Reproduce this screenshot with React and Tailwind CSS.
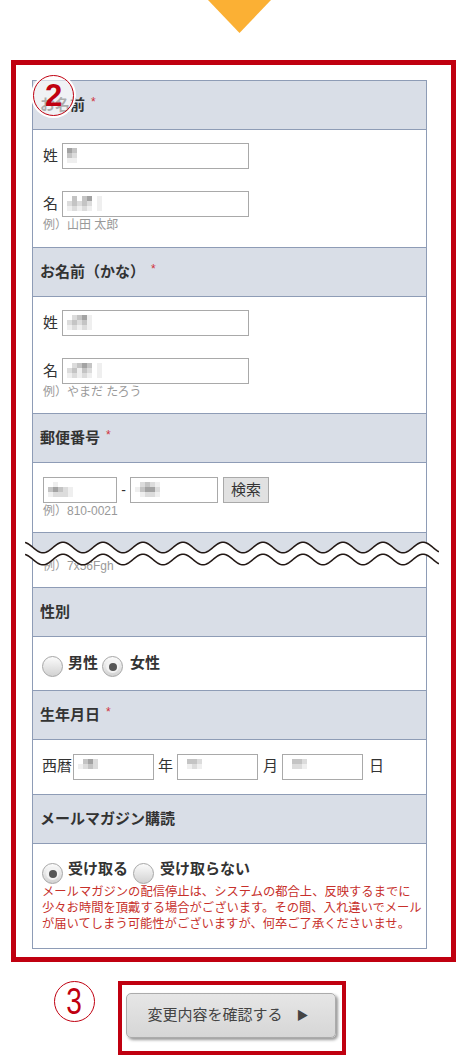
const font = "font-['Liberation_Sans','Noto_Sans_CJK_JP',sans-serif]"

const shades = { "1": "bg-[#efefef]", "2": "bg-[#dcdcdc]", "3": "bg-[#c4c4c4]", "4": "bg-[#a3a3a3]" }

// mosaic that hides the filled-in personal data
function Pix({ rows }) {
  return (
    <div className="absolute left-[4px] top-[4px] flex flex-col">
      {rows.map((r, i) => (
        <div key={i} className="flex">
          {r.split("").map((c, j) => (
            <div key={j} className={"w-[5px] h-[5px] " + (shades[c] || "")} />
          ))}
        </div>
      ))}
    </div>
  )
}

function Input({ w, rows }) {
  return (
    <div className={"relative h-[26px] border border-[#a9a9a9] bg-white shrink-0 " + w}>
      {rows && <Pix rows={rows} />}
    </div>
  )
}

function Head({ children, req }) {
  return (
    <div className="h-[49px] bg-[#d9dee7] border-b border-[#8e9cb6] flex items-center pl-[7px] text-[15px] font-bold text-[#333]">
      <span>{children}</span>
      {req && <span className="text-[#d0313a] text-[12px] font-normal ml-[6px] -mt-[6px]">*</span>}
    </div>
  )
}

function Example({ children }) {
  return <div className="h-[16px] leading-[16px] text-[12px] text-[#999] pl-[10px]">{children}</div>
}

function Radio({ checked, size = "w-[21px] h-[21px]", mt }) {
  return (
    <div className={"shrink-0 rounded-full border border-[#a6a6a6] bg-[linear-gradient(#fbfbfb,#d2d2d2)] flex items-center justify-center " + size + " " + mt}>
      {checked && (
        <div className="w-[13px] h-[13px] rounded-full bg-[#f2f2f2] flex items-center justify-center">
          <div className="w-[8px] h-[8px] rounded-full bg-[#555]" />
        </div>
      )}
    </div>
  )
}

function wavePts(yc) {
  const pts = []
  for (let x = 0; x <= 414; x += 1) {
    const y = yc - 5.3 * Math.cos((2 * Math.PI * (x - 38)) / 40)
    pts.push([x, y.toFixed(2)])
  }
  return pts
}

function Wave() {
  const top = wavePts(7.5)
  const bot = wavePts(19.5)
  const line = (p) => p.map((q, i) => (i ? "L" : "M") + q[0] + "," + q[1]).join("")
  const fill = line(top) + bot.slice().reverse().map((q) => "L" + q[0] + "," + q[1]).join("") + "Z"
  return (
    <svg className="absolute left-[-8px] top-[7px]" width="414" height="30" viewBox="0 0 414 30">
      <path d={fill} fill="#fff" />
      <path d={line(top)} fill="none" stroke="#231815" strokeWidth="1.6" />
      <path d={line(bot)} fill="none" stroke="#231815" strokeWidth="1.6" />
    </svg>
  )
}

function NameRow({ label, rows }) {
  return (
    <div className="flex items-center pl-[10px]">
      <span className="w-[19px] text-[15px] leading-[26px] text-[#333]">{label}</span>
      <Input w="w-[187px]" rows={rows} />
    </div>
  )
}

export default function App() {
  return (
    <div className={"w-[468px] h-[1059px] bg-white overflow-hidden " + font}>
      <div className="pl-[208px]">
        <svg width="63" height="33" viewBox="0 0 63 33">
          <polygon points="0,0 63,0 31.5,33" fill="#fbb034" />
        </svg>
      </div>

      <div className="relative mt-[27px] ml-[11px] w-[445px] border-[5px] border-[#c00010] pt-[15px] pl-[16px] pr-[24px] pb-[8px]">
        <div className="border-x border-t border-[#8e9cb6]">
          <Head req>お名前</Head>
          <div className="border-b border-[#8e9cb6] pt-[13px] pb-[14px]">
            <NameRow label="姓" rows={["43", "32", "11"]} />
            <div className="mt-[22px]">
              <NameRow label="名" rows={["0303401", "2323201", "1212101"]} />
            </div>
            <Example>例）山田 太郎</Example>
          </div>

          <Head req>お名前（かな）</Head>
          <div className="border-b border-[#8e9cb6] pt-[13px] pb-[13px]">
            <NameRow label="姓" rows={["02341", "23231", "12121"]} />
            <div className="mt-[22px]">
              <NameRow label="名" rows={["0234301", "2313201", "1212101"]} />
            </div>
            <Example>例）やまだ たろう</Example>
          </div>

          <Head req>郵便番号</Head>
          <div className="border-b border-[#8e9cb6] pt-[14px] pb-[13px]">
            <div className="flex items-center pl-[10px]">
              <Input w="w-[74px]" rows={["01", "34321", "12221"]} />
              <span className="w-[13px] text-center text-[14px] text-[#333]">-</span>
              <Input w="w-[88px]" rows={["02321", "13442", "01221"]} />
              <div className="ml-[5px] w-[46px] h-[26px] border border-[#a9a9a9] bg-[#e1e1e1] text-[15px] leading-[24px] text-[#333] text-center">
                検索
              </div>
            </div>
            <Example>例）810-0021</Example>
          </div>

          <div className="relative border-b border-[#8e9cb6]">
            <div className="h-[20px] bg-[#d9dee7]" />
            <div className="pt-[5px] pb-[13px]">
              <Example>例）7x56Fgh</Example>
            </div>
            <Wave />
          </div>

          <Head>性別</Head>
          <div className="border-b border-[#8e9cb6] pt-[16px] pb-[13px] pl-[9px] h-[54px] flex items-start text-[15px] leading-[20px] font-bold text-[#333]">
            <Radio mt="mt-[3px]" />
            <span className="ml-[5px]">男性</span>
            <Radio checked mt="mt-[3px] ml-[4px]" />
            <span className="ml-[7px]">女性</span>
          </div>

          <Head req>生年月日</Head>
          <div className="border-b border-[#8e9cb6] h-[55px] pb-[1px] pl-[9px] flex items-center text-[15px] text-[#333]">
            <span>西暦</span>
            <div className="ml-[1px]">
              <Input w="w-[81px]" rows={["0342", "1232"]} />
            </div>
            <span className="ml-[4px]">年</span>
            <div className="ml-[4px]">
              <Input w="w-[81px]" rows={["0332", "0121"]} />
            </div>
            <span className="ml-[5px]">月</span>
            <div className="ml-[4px]">
              <Input w="w-[81px]" rows={["0332", "0221"]} />
            </div>
            <span className="ml-[6px]">日</span>
          </div>

          <Head>メールマガジン購読</Head>
          <div className="border-b border-[#8e9cb6] pt-[15px] pb-[16px] pl-[9px]">
            <div className="flex items-start h-[24px] text-[15px] leading-[20px] font-bold text-[#333]">
              <Radio checked mt="mt-[4px]" />
              <span className="ml-[5px]">受け取る</span>
              <Radio mt="mt-[4px] ml-[5px]" />
              <span className="ml-[6px]">受け取らない</span>
            </div>
            <p className="mt-[1px] text-[12.3px] leading-[16px] text-[#c7302b] whitespace-nowrap">
              メールマガジンの配信停止は、システムの都合上、反映するまでに
              <br />
              少々お時間を頂戴する場合がございます。その間、入れ違いでメール
              <br />
              が届いてしまう可能性がございますが、何卒ご了承くださいませ。
            </p>
          </div>
        </div>

        {/* step marker over the first heading */}
        <div className="absolute left-[15px] top-[8px] w-[45px] h-[45px] rounded-full border-[2px] border-white bg-white/60 flex items-center justify-center">
          <div className="w-[41px] h-[41px] rounded-full border-[1.5px] border-[#c00010] flex items-center justify-center">
            <span className="font-['Liberation_Sans',sans-serif] font-bold text-[31px] leading-none text-[#c00010]">2</span>
          </div>
        </div>
      </div>

      <div className="flex items-start mt-[19px] pl-[54px]">
        <div className="w-[41px] h-[41px] rounded-full border-[1.5px] border-[#c00010] flex items-center justify-center">
          <span className="inline-block scale-x-[0.78] font-['Liberation_Sans',sans-serif] text-[36px] leading-none text-[#c00010]">3</span>
        </div>
        <div className="ml-[23px] w-[228px] h-[74px] border-[4px] border-[#c00010] pt-[8px] pl-[4px]">
          <div className="w-[210px] h-[45px] rounded-[5px] border border-[#ababab] bg-[linear-gradient(#e6e6e6,#d6d6d6)] shadow-[2px_2px_3px_rgba(0,0,0,0.4)] flex items-center justify-center pr-[6px] text-[15px] text-[#444]">
            <span>変更内容を確認する</span>
            <span className="ml-[14px] text-[12px]">▶</span>
          </div>
        </div>
      </div>
    </div>
  )
}
